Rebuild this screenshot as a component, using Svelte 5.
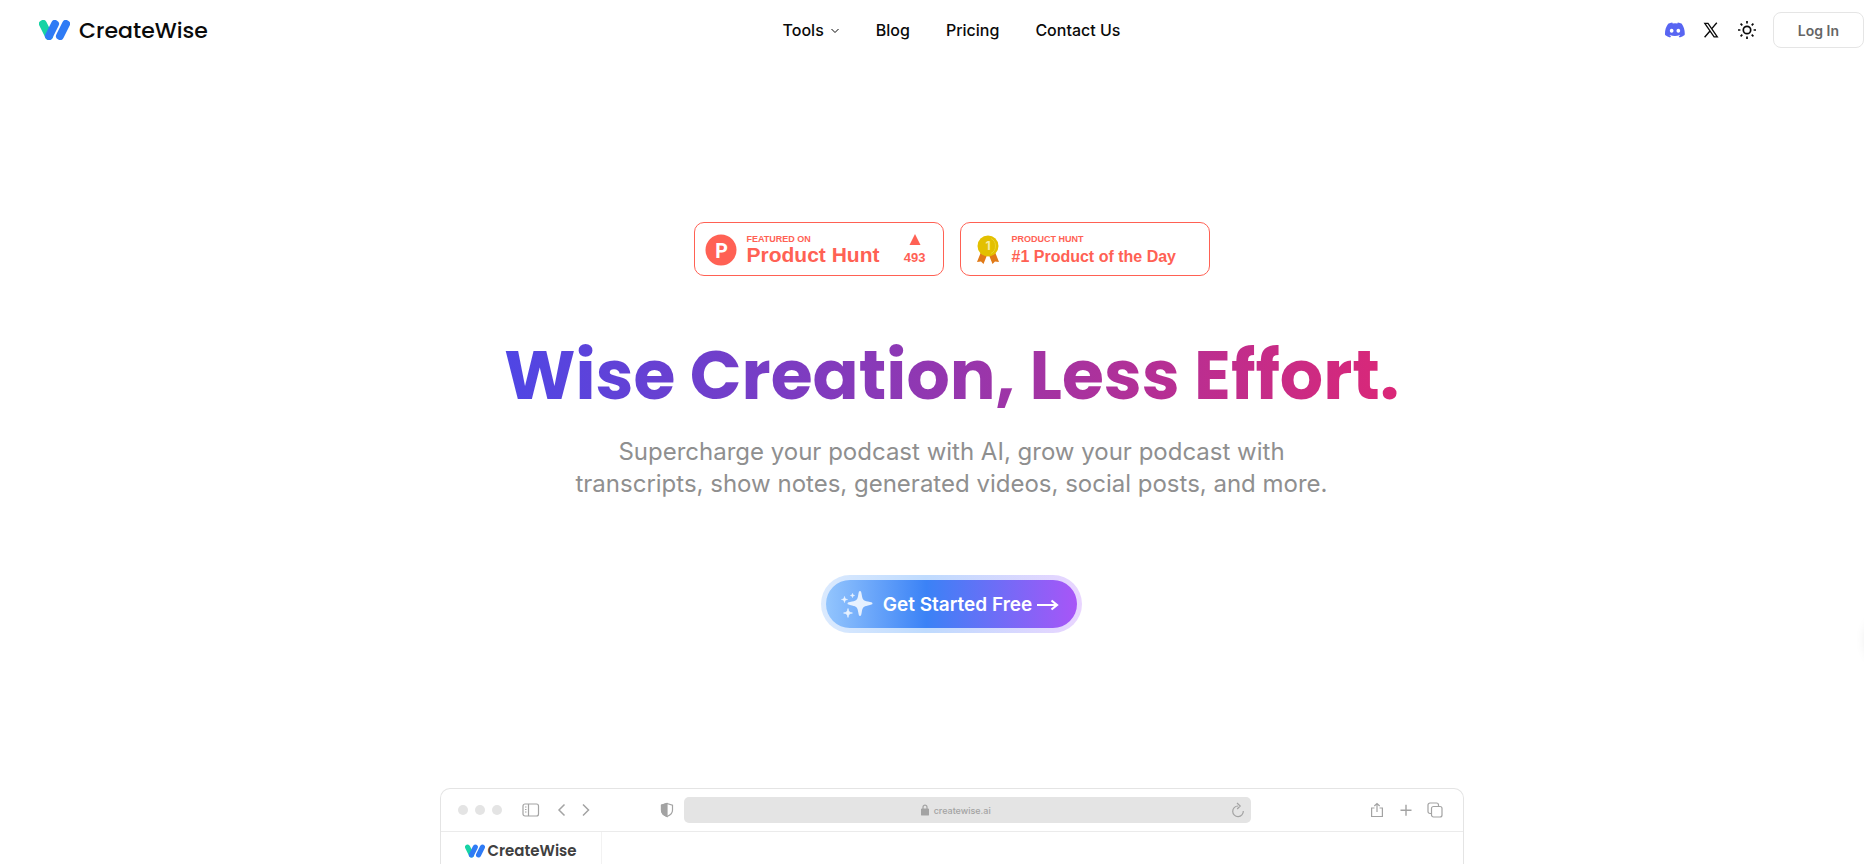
<script lang="ts">
  const links = ['Blog', 'Pricing', 'Contact Us'];
</script>

{#snippet mark()}
  <svg class="mark" viewBox="0 0 31 20" aria-hidden="true">
    <g fill="none" stroke-width="8" stroke-linecap="round">
      <path d="M4 4l6 12" stroke="#17d3a5" />
      <path d="M10 16L16 4M21 16L27 4" stroke="#2f7bf5" />
    </g>
  </svg>
{/snippet}

<div class="page">
  <header>
    <a class="brand" href="/">{@render mark()}<span>CreateWise</span></a>

    <nav>
      <button class="tools">
        Tools
        <svg width="10" height="10" viewBox="0 0 10 10" fill="none" stroke="currentColor"><path d="M1.500 4L5 7.500 8.500 4" /></svg>
      </button>
      {#each links as link}
        <a href="#{link.toLowerCase().replace(' ', '-')}">{link}</a>
      {/each}
    </nav>

    <div class="actions">
      <a href="#discord" aria-label="Discord">
        <svg width="20" height="20" viewBox="0 0 24 24" fill="#5865f2">
          <path d="M20.3 4.4A19.8 19.8 0 0 0 15.4 2.9c-.2.4-.4.8-.6 1.2a18.300 18.300 0 0 0-5.500 0c-.2-.4-.4-.8-.6-1.200a19.700 19.700 0 0 0-4.900 1.500C.5 9-.3 13.600.100 18.100a20 20 0 0 0 6 3c.5-.6.9-1.300 1.200-2-.6-.2-1.300-.5-1.900-.9l.4-.3c3.900 1.800 8.200 1.800 12.100 0l.4.3c-.6.4-1.200.6-1.900.9.4.7.8 1.400 1.200 2a19.800 19.800 0 0 0 6-3c.5-5.200-.8-9.700-3.500-13.700zM8 15.300c-1.200 0-2.200-1.100-2.200-2.400s1-2.400 2.200-2.400 2.200 1.100 2.200 2.400c0 1.300-1 2.400-2.200 2.400zm8 0c-1.200 0-2.200-1.100-2.200-2.400s1-2.400 2.200-2.400 2.200 1.100 2.200 2.400c0 1.300-1 2.400-2.200 2.400z" />
        </svg>
      </a>
      <a href="#x" aria-label="X">
        <svg width="20" height="20" viewBox="0 0 20 20" fill="none" stroke="#0a0a0a">
          <path d="M3.800 3.300H7l9.300 13.500h-3.200z" stroke-width="1.300" />
          <path d="M15.800 2.800l-5 5.800M9 11L3.600 17.300" stroke-width="1.400" />
        </svg>
      </a>
      <button class="theme" aria-label="Toggle theme">
        <svg width="20" height="20" viewBox="0 0 20 20" fill="none" stroke="#0a0a0a" stroke-width="1.700">
          <circle cx="10" cy="10" r="3.700" />
          <path d="M10 1v2.400M10 16.600V19M1 10h2.400M16.600 10H19M3.600 3.600l1.700 1.700M14.700 14.700l1.700 1.700M3.600 16.400l1.700-1.700M14.700 5.300l1.700-1.700" />
        </svg>
      </button>
      <button class="login">Log In</button>
    </div>
  </header>

  <main>
    <div class="badges">
      <a class="badge" href="#featured">
        <svg width="32" height="32" viewBox="0 0 32 32">
          <circle cx="16" cy="16" r="15.500" fill="#ff6154" />
          <text x="16.500" y="23.500" text-anchor="middle" class="ph-letter">P</text>
        </svg>
        <span class="badge-text">
          <small>FEATURED ON</small>
          <strong>Product Hunt</strong>
        </span>
        <span class="votes">
          <svg width="12" height="11" viewBox="0 0 12 11" fill="#ff6154"><path d="M6 0l5.500 11H.5z" /></svg>
          493
        </span>
      </a>
      <a class="badge award" href="#award">
        <svg width="22" height="30" viewBox="0 0 22 30">
          <path d="M4 17L0 27l4-.5L6.500 29l4-10zM18 17l4 10-4-.5-2.500 2.500-4-10z" fill="#e17a18" />
          <circle cx="11" cy="11" r="10.500" fill="#e3c000" />
          <path d="M14 3.500a8.500 8.500 0 0 1 0 15" fill="none" stroke="#ebd22e" />
          <text x="11" y="15" text-anchor="middle" class="medal-number">1</text>
        </svg>
        <span class="badge-text">
          <small>PRODUCT HUNT</small>
          <strong>#1 Product of the Day</strong>
        </span>
      </a>
    </div>

    <h1>Wise Creation, Less Effort.</h1>
    <p>Supercharge your podcast with AI, grow your podcast with<br />transcripts, show notes, generated videos, social posts, and more.</p>

    <button class="cta">
      <svg width="32" height="28" viewBox="0 0 32 28" fill="#fff" fill-opacity=".82">
        <path d="M19 1c1 0 1.300 1 1.700 3.500C21.500 9.500 22 10.500 27 11.600c3 .6 4.500.9 4.500 1.900s-1.500 1.300-4.500 1.900c-5 1.100-5.500 2.100-6.300 7.100-.4 2.500-.7 3.500-1.700 3.500s-1.300-1-1.700-3.500c-.8-5-1.300-6-6.300-7.100-3-.6-4.500-.9-4.500-1.900s1.500-1.300 4.500-1.900c5-1.100 5.500-2.100 6.300-7.100C17.700 2 18 1 19 1z" />
        <path d="M7 18.500c.7 3.300 1.200 3.800 4.500 4.500-3.300.7-3.800 1.200-4.500 4.500-.7-3.300-1.200-3.800-4.500-4.500 3.300-.7 3.800-1.200 4.500-4.500zM3.500 6.500c.5 2.300.9 2.600 3 3-2.100.4-2.500.7-3 3-.5-2.300-.9-2.600-3-3 2.100-.4 2.500-.7 3-3zM11.500 3.500c.4 1.500.7 1.700 2 2-1.300.3-1.600.5-2 2-.4-1.500-.7-1.700-2-2 1.300-.3 1.600-.5 2-2z" stroke="#fff" stroke-opacity=".5" stroke-linejoin="round" />
      </svg>
      <span>Get Started Free</span>
      <svg width="22" height="14" viewBox="0 0 22 14" fill="none" stroke="#fff" stroke-width="2.200"><path d="M0 8h19M14.500 3.500L20 8l-5.500 4.500" /></svg>
    </button>

    <section class="browser" aria-label="App preview">
      <div class="toolbar">
        <div class="dots"><i></i><i></i><i></i></div>
        <svg class="panel" width="18" height="16" viewBox="0 0 18 16"><rect x="1" y="2" width="15.500" height="12" rx="2" /><path d="M6.500 2v12M3 5h1.500M3 7.500h1.500M3 10h1.500" /></svg>
        <svg class="back" width="10" height="16" viewBox="0 0 10 16"><path d="M8.500 2.500L3 8l5.500 5.500" stroke-width="1.500" /></svg>
        <svg class="forward" width="10" height="16" viewBox="0 0 10 16"><path d="M2 2.500L7.500 8 2 13.500" stroke-width="1.500" /></svg>
        <svg class="shield" width="14" height="16" viewBox="0 0 14 16"><path d="M7 1.500l5.500 1.800v5c0 3-2.500 5-5.500 6.200-3-1.200-5.500-3.200-5.500-6.200v-5z" /><path d="M7 1.500v13c-3-1.200-5.500-3.200-5.500-6.200v-5z" fill="#a3a3a3" /></svg>
        <div class="address">
          <svg width="8" height="12" viewBox="0 0 8 12"><rect x=".5" y="5" width="7" height="6" rx=".5" fill="#a3a3a3" /><path d="M2 5V3.200a2 2 0 0 1 4 0V5" /></svg>
          <span>createwise.ai</span>
          <svg class="reload" width="14" height="16" viewBox="0 0 14 16"><path d="M7 4a5.300 5.300 0 1 0 5.300 5M6 1l3.200 3L6.200 7" /></svg>
        </div>
        <div class="tabs">
          <svg width="16" height="16" viewBox="0 0 16 16"><path d="M5.500 6H2.600v8.500h10.800V6h-2.900M8 10V1.500M5.300 4L8 1.500 10.700 4" /></svg>
          <svg width="16" height="16" viewBox="0 0 16 16"><path d="M8 2.700v11M2.500 8.200h11" stroke-width="1.400" /></svg>
          <svg width="16" height="16" viewBox="0 0 16 16"><rect x="4.500" y="4.500" width="10.500" height="10.500" rx="2" /><path d="M4.500 11.500H3a2 2 0 0 1-2-2V3a2 2 0 0 1 2-2h6.500a2 2 0 0 1 2 2v1.500" /></svg>
        </div>
      </div>
      <div class="app">
        <aside>{@render mark()}<span>CreateWise</span></aside>
      </div>
    </section>
  </main>

  <div class="widget"></div>
</div>

<style>
  :global(body) { background: #fff; }
  .page {
    position: relative;
    display: flex;
    flex-direction: column;
    height: 100vh;
    box-sizing: border-box;
    padding-left: 39px;
    overflow: hidden;
    font-family: Inter, sans-serif;
    color: #0a0a0a;
  }
  a { color: inherit; text-decoration: none; }
  button { font: inherit; color: inherit; background: none; border: 0; padding: 0; cursor: pointer; }
  svg { display: block; flex: none; }

  header {
    display: grid;
    grid-template-columns: 1fr auto 1fr;
    align-items: center;
    height: 60px;
  }
  .brand { display: flex; align-items: center; gap: 9px; font-family: Poppins, Inter, sans-serif; font-size: 22px; font-weight: 500; }
  .mark { width: 31px; height: 20px; }
  nav { display: flex; align-items: center; gap: 36px; font-size: 16px; font-weight: 500; }
  .tools { display: flex; align-items: center; gap: 6px; }
  .actions { display: flex; align-items: center; justify-content: flex-end; gap: 16px; }
  .login {
    height: 36px;
    padding: 0 24px;
    border: 1px solid #e5e5e5;
    border-radius: 8px;
    font-size: 14px;
    font-weight: 600;
    color: #666;
  }

  main { display: flex; flex-direction: column; align-items: center; flex: 1; padding-top: 162px; min-height: 0; }
  .badges { display: flex; gap: 16px; font-family: "Liberation Sans", sans-serif; }
  .badge {
    display: flex;
    align-items: center;
    box-sizing: border-box;
    width: 250px;
    height: 54px;
    padding: 2px 17px 0 10px;
    border: 1px solid #ff6154;
    border-radius: 10px;
    color: #ff6154;
    font-weight: 700;
  }
  .badge-text { display: flex; flex-direction: column; align-self: flex-start; margin: 9px 0 0 10px; }
  .badge-text small { font-size: 9px; line-height: 10px; }
  .badge-text strong { font-size: 21px; line-height: 22px; }
  .award { padding-left: 16px; }
  .award .badge-text { margin-left: 13px; }
  .award strong { font-size: 16px; line-height: 26px; }
  .votes { display: flex; flex-direction: column; align-items: center; gap: 5px; margin-left: auto; font-size: 13px; line-height: 16px; }
  .ph-letter { font: 600 21px Poppins, Inter, sans-serif; fill: #fff; }
  .medal-number { font: 700 12px Inter, sans-serif; fill: #f6eda5; }

  h1 {
    margin: 56px 0 0;
    font-family: Poppins, Inter, sans-serif;
    font-size: 68px;
    line-height: 88px;
    font-weight: 700;
    white-space: nowrap;
    color: transparent;
    background: linear-gradient(to right, #4f46e5, #db2777);
    background-clip: text;
  }
  p { margin: 16px 0 0; font-size: 24px; line-height: 32px; text-align: center; color: #8f8f8f; }

  .cta {
    display: flex;
    align-items: center;
    box-sizing: border-box;
    height: 58px;
    margin-top: 75px;
    padding: 0 18px 0 15px;
    border: 5px solid transparent;
    border-radius: 29px;
    background:
      linear-gradient(to right, #93c5fd, #3b82f6 40%, #a855f7) padding-box,
      linear-gradient(to right, #dbeafe, #bfdbfe 40%, #e9d5ff) border-box;
    color: #fff;
    font-size: 19px;
    font-weight: 600;
  }
  .cta span { margin: 0 5px 0 10px; }

  .browser {
    display: flex;
    flex-direction: column;
    flex: 1;
    box-sizing: border-box;
    width: 100%;
    max-width: 1024px;
    margin-top: 155px;
    border: 1px solid #e4e4e4;
    border-bottom: 0;
    border-radius: 10px 10px 0 0;
  }
  .toolbar { display: flex; align-items: center; height: 42px; padding: 0 20px 0 17px; border-bottom: 1px solid #ebebeb; }
  .toolbar svg { fill: none; stroke: #a3a3a3; stroke-width: 1.2; }
  .dots { display: flex; gap: 7px; }
  .dots i { width: 10px; height: 10px; border-radius: 50%; background: #e4e4e4; }
  .panel { margin-left: 20px; }
  .back { margin-left: 16px; }
  .forward { margin-left: 15px; }
  .shield { margin-left: auto; }
  .address {
    display: grid;
    grid-template-columns: 10fr auto auto 11fr;
    align-items: center;
    gap: 5px;
    box-sizing: border-box;
    width: 567px;
    height: 26px;
    margin: 0 118px 0 10px;
    padding: 0 6px;
    border-radius: 5px;
    background: #e4e4e4;
    color: #a3a3a3;
    font-size: 9px;
    font-weight: 500;
  }
  .address > :first-child { grid-column: 2; }
  .reload { justify-self: end; }
  .tabs { display: flex; gap: 13px; }
  .app { flex: 1; display: flex; }
  aside {
    display: flex;
    align-items: flex-start;
    gap: 3px;
    box-sizing: border-box;
    width: 161px;
    padding: 9px 0 0 24px;
    border-right: 1px solid #f2f2f2;
    color: #404040;
    font-family: Poppins, Inter, sans-serif;
    font-size: 15px;
    line-height: 20px;
    font-weight: 600;
  }
  aside .mark { width: 20px; height: 20px; }

  .widget {
    position: absolute;
    right: -58px;
    bottom: 196px;
    width: 56px;
    height: 56px;
    border-radius: 50%;
    box-shadow: 0 0 12px rgba(0, 0, 0, 0.1);
  }
</style>
